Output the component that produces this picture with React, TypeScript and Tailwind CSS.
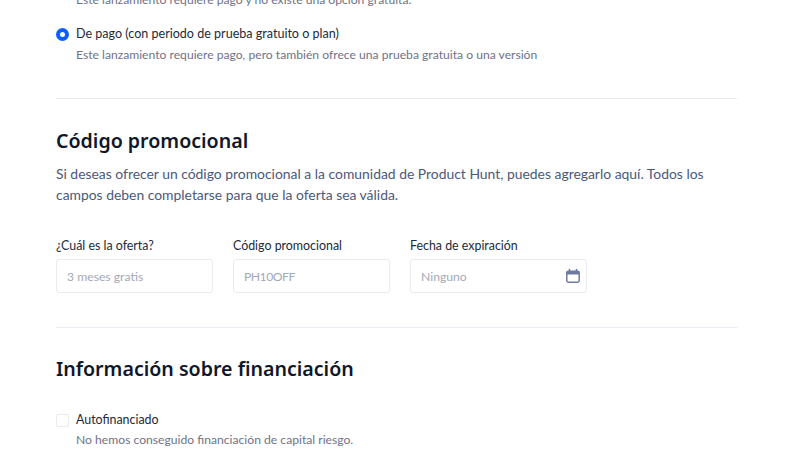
import React from "react";

function Field({ label, placeholder, icon, wide, tight }: { label: string; placeholder: string; icon?: boolean; wide?: boolean; tight?: boolean }) {
  return (
    <div className={wide ? "w-[177px] flex flex-col" : "w-[157px] flex flex-col"}>
      <label className="text-[12.4px] leading-[20px] text-[#21293c] mb-[3px]">{label}</label>
      <div className="h-[34px] rounded-[3px] border border-[#e8ebef] bg-white px-[10px] flex items-center justify-between">
        <span className={tight ? "pt-[2px] text-[12.2px] tracking-[-0.5px] text-[#a3a9b6]" : "pt-[2px] text-[12.2px] text-[#a3a9b6]"}>{placeholder}</span>
        {icon && (
          <svg width="16" height="16" viewBox="0 0 16 16" className="mr-[-5px]" fill="none">
            <path d="M4.5 1.5v3M11.5 1.5v3" stroke="#6f7aa3" strokeWidth="1.6" strokeLinecap="round" />
            <rect x="1.8" y="3.3" width="12.4" height="10.9" rx="1.6" stroke="#6f7aa3" strokeWidth="1.5" />
            <path d="M1.5 3.5h13v3h-13z" fill="#6f7aa3" />
          </svg>
        )}
      </div>
    </div>
  );
}

export default function App() {
  return (
    <div className="h-[464px] overflow-hidden bg-white pl-[56px] pr-[63px] font-['Lato','Noto_Sans',sans-serif]">
      <div className="-mt-[10px]">
        <p className="pl-[20px] text-[12.15px] leading-[20px] text-[#6f7287]">
          Este lanzamiento requiere pago y no existe una opción gratuita.
        </p>

        <div className="mt-[14px] flex items-center gap-[7px] h-[20px]">
          <span className="w-[13px] h-[13px] rounded-full border-[4px] border-[#0b5fff] bg-white" />
          <span className="text-[12.55px] leading-[20px] text-[#21293c]">De pago (con periodo de prueba gratuito o plan)</span>
        </div>
        <p className="pl-[20px] mt-[1px] text-[12.15px] leading-[20px] text-[#6f7287]">
          Este lanzamiento requiere pago, pero también ofrece una prueba gratuita o una versión
        </p>

        <div className="mt-[33px] h-px bg-[#e8ebef]" />

        <h2 className="mt-[26px] font-['Noto_Sans'] text-[19.6px] leading-[32px] font-semibold text-[#0f172a]">Código promocional</h2>
        <p className="mt-[6px] text-[13.9px] leading-[21px] text-[#4b587c]">
          Si deseas ofrecer un código promocional a la comunidad de Product Hunt, puedes agregarlo aquí. Todos los campos deben completarse para que la oferta sea válida.
        </p>

        <div className="mt-[31px] flex gap-[20px]">
          <Field label="¿Cuál es la oferta?" placeholder="3 meses gratis" />
          <Field label="Código promocional" placeholder="PH10OFF" tight />
          <Field label="Fecha de expiración" placeholder="Ninguno" icon wide />
        </div>

        <div className="mt-[34px] h-px bg-[#e8ebef]" />

        <h2 className="mt-[25px] font-['Noto_Sans'] text-[19.6px] leading-[32px] font-semibold text-[#0f172a]">Información sobre financiación</h2>

        <div className="mt-[25px] flex items-center gap-[7px] h-[20px]">
          <span className="w-[13px] h-[13px] rounded-[2px] border border-[#e8ebef] bg-white" />
          <span className="text-[12.4px] leading-[20px] text-[#21293c]">Autofinanciado</span>
        </div>
        <p className="pl-[20px] mt-[0px] text-[12.15px] leading-[20px] text-[#6f7287]">
          No hemos conseguido financiación de capital riesgo.
        </p>
      </div>
    </div>
  );
}
